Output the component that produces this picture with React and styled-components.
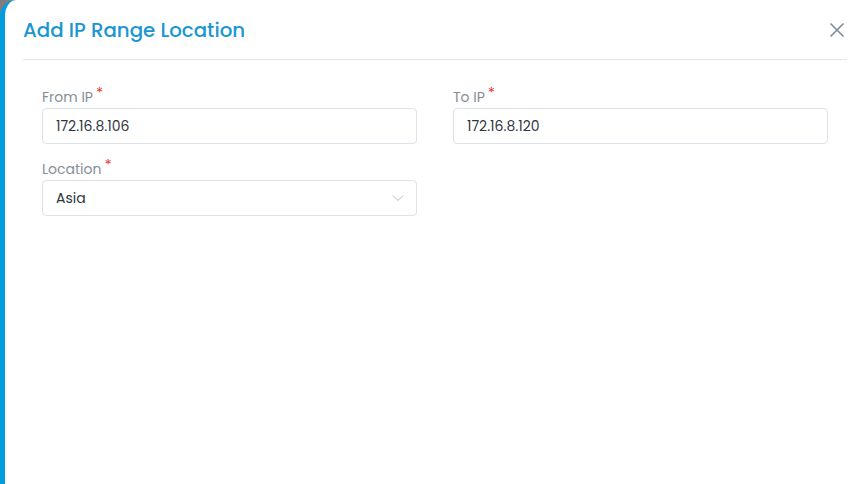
import React from "react";
import styled, { createGlobalStyle } from "styled-components";

const GlobalStyle = createGlobalStyle`
  html, body { margin: 0; padding: 0; background: #7d7d7d; }
  body { font-family: "Poppins", "Inter", "Noto Sans", sans-serif; }
  * { box-sizing: border-box; }
`;

const Modal = styled.div`
  width: 862px;
  height: 484px;
  background: #fff;
  border-left: 5px solid #009ee0;
  border-top-left-radius: 16px;
  overflow: hidden;
`;

const Header = styled.div`
  display: flex;
  align-items: center;
  justify-content: space-between;
  height: 60px;
  margin: 0 15px 0 18px;
  border-bottom: 1px solid #e1e5eb;
`;

const Title = styled.h2`
  margin: 0;
  font-size: 19.8px;
  font-weight: 500;
  color: #1a96d4;
`;

const Close = styled.button`
  border: none;
  background: none;
  padding: 0;
  margin-right: 2px;
  display: flex;
  cursor: pointer;
`;

const Body = styled.div`
  padding: 27px 34px 0 37px;
  display: grid;
  grid-template-columns: 375px 375px;
  column-gap: 36px;
  row-gap: 15px;
`;

const Field = styled.div`
  display: flex;
  flex-direction: column;
`;

const Label = styled.label`
  font-size: 14px;
  color: #858e99;
  height: 20px;
  line-height: 20px;
  margin-bottom: 1px;
`;

const Star = styled.span`
  color: #e53935;
  font-size: 15px;
  position: relative;
  top: -4px;
  margin-left: 3px;
`;

const Box = styled.div`
  height: 36px;
  border: 1px solid #dde2ea;
  border-radius: 4px;
  display: flex;
  align-items: center;
  justify-content: space-between;
  padding: 0 12px 0 13px;
  font-size: 14px;
  color: #2f3640;
`;

const Chevron = () => (
  <svg width="12" height="8" viewBox="0 0 12 8" fill="none">
    <path d="M1 1.5l5 5 5-5" stroke="#b5bcc6" strokeWidth="1" />
  </svg>
);

function InputField({ label, value, select }) {
  return (
    <Field>
      <Label>
        {label}
        <Star>*</Star>
      </Label>
      <Box>
        <span>{value}</span>
        {select && <Chevron />}
      </Box>
    </Field>
  );
}

export default function App() {
  return (
    <>
      <GlobalStyle />
      <Modal>
        <Header>
          <Title>Add IP Range Location</Title>
          <Close aria-label="close">
            <svg width="16" height="16" viewBox="0 0 16 16">
              <path d="M1.5 1.5l13 13M14.5 1.5l-13 13" stroke="#7d8b9c" strokeWidth="1.6" />
            </svg>
          </Close>
        </Header>
        <Body>
          <InputField label="From IP" value="172.16.8.106" />
          <InputField label="To IP" value="172.16.8.120" />
          <InputField label="Location" value="Asia" select />
        </Body>
      </Modal>
    </>
  );
}
